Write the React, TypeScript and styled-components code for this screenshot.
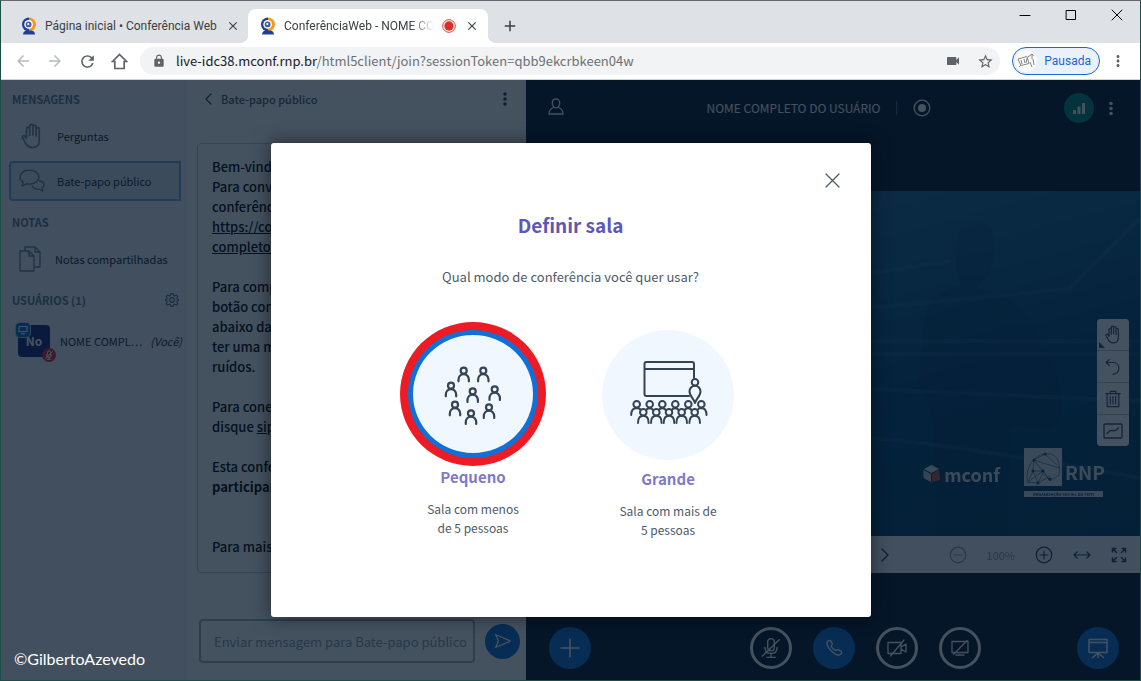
import React from "react";
import styled, { createGlobalStyle, css } from "styled-components";
import {
  MdAdd,
  MdArrowBack,
  MdArrowForward,
  MdClose,
  MdLock,
  MdMoreVert,
  MdRefresh,
  MdStarBorder,
  MdVideocam,
} from "react-icons/md";

const uiFont = `"Noto Sans CJK JP", "Noto Sans CJK SC", "Noto Sans", sans-serif`;

const GlobalStyle = createGlobalStyle`
  * { box-sizing: border-box; }
  body { margin: 0; font-family: ${uiFont}; }
  button, input { font-family: inherit; }
  button { padding: 0; border: 0; background: none; color: inherit; display: inline-flex; align-items: center; justify-content: center; }
  h1, h2, h3, p, ul { margin: 0; padding: 0; list-style: none; }
  svg { display: block; flex: none; }
`;

/* ---------- browser frame ---------- */

const Window = styled.div`
  min-height: 100vh;
  display: flex;
  flex-direction: column;
  border: 1px solid #1d4d47;
  border-top-color: #66686b;
  background: #dee1e6;
`;

const TabStrip = styled.div`
  display: flex;
  height: 42px;
  padding: 8px 0 0 7px;
`;

const Tab = styled.div<{ $active?: boolean }>`
  position: relative;
  display: flex;
  align-items: center;
  gap: 8px;
  width: 240px;
  padding: 0 8px 0 13px;
  border-radius: 8px 8px 0 0;
  font-family: Roboto, sans-serif;
  font-size: 12px;
  color: #3c4043;
  ${(p) =>
    p.$active &&
    css`
      padding: 0 9px 0 12px;
      background: #fff;
      &::before,
      &::after {
        content: "";
        position: absolute;
        bottom: 0;
        width: 8px;
        height: 8px;
      }
      &::before {
        left: -8px;
        background: radial-gradient(circle at 0 0, transparent 8px, #fff 8px);
      }
      &::after {
        right: -8px;
        background: radial-gradient(circle at 100% 0, transparent 8px, #fff 8px);
      }
    `}
`;

const TabTitle = styled.span<{ $fade?: boolean }>`
  flex: 1;
  overflow: hidden;
  white-space: nowrap;
  ${(p) =>
    p.$fade &&
    css`
      mask-image: linear-gradient(90deg, #000 84%, transparent);
    `}
`;

const TabActions = styled.span`
  display: flex;
  align-items: center;
  gap: 9px;
`;

const NewTab = styled.button`
  width: 44px;
  color: #3c4043;
`;

const WindowControls = styled.div`
  display: flex;
  align-items: flex-start;
  gap: 34px;
  margin-left: auto;
  padding-right: 17px;
`;

const AddressRow = styled.div`
  display: flex;
  align-items: center;
  gap: 12px;
  height: 37px;
  padding: 0 13px;
  background: #fff;
  border-bottom: 1px solid #d0d2d5;
  color: #5f6368;
`;

const NavButtons = styled.div`
  display: flex;
  gap: 14px;
`;

const AddressBar = styled.div`
  flex: 1;
  display: flex;
  align-items: center;
  gap: 10px;
  height: 28px;
  padding: 0 6px 0 12px;
  border-radius: 14px;
  background: #f1f3f4;
`;

const Url = styled.span`
  flex: 1;
  font-size: 13px;
  line-height: 20px;
  white-space: nowrap;
  color: #6d7175;
  b {
    font-weight: 400;
    color: #202124;
  }
`;

const BarActions = styled.div`
  display: flex;
  align-items: center;
  gap: 16px;
`;

const ProfileArea = styled.div`
  display: flex;
  align-items: center;
  gap: 9px;
`;

const Profile = styled.button`
  && {
    gap: 7px;
    height: 28px;
    padding: 0 8px 0 2px;
    border: 1px solid #1967d2;
    border-radius: 14px;
    background: #eaf1fb;
    color: #1967d2;
    font-family: Roboto, sans-serif;
    font-size: 12px;
  }
`;

/* ---------- conference page ---------- */

const Page = styled.div`
  position: relative;
  flex: 1;
  display: flex;
  background: #06172a;
`;

const Sidebar = styled.nav`
  width: 186px;
  padding: 10px 5px 0 8px;
  background: #f3f6fa;
  color: #3c4754;
  font-size: 11px;
  line-height: 18px;
`;

const SideHeading = styled.h2`
  display: flex;
  align-items: center;
  justify-content: space-between;
  height: 18px;
  padding: 0 3px;
  font-size: 11px;
  font-weight: 700;
  color: #667789;
`;

const SideItem = styled.button<{ $selected?: boolean }>`
  && {
    display: flex;
    justify-content: flex-start;
    gap: 12px;
    width: 172px;
    height: 40px;
    padding: 0 8px;
    font-size: 11px;
    white-space: nowrap;
    border: 2px solid transparent;
    border-radius: 4px 0 0 4px;
    color: #1c2733;
    ${(p) =>
      p.$selected &&
      css`
        border-color: #7aaae2;
        background: #dce6f3;
      `}
  }
  svg {
    color: #74859a;
  }
`;

const SideGroup = styled.section`
  padding-bottom: 12px;
  & > h2 + * {
    margin-top: 8px;
  }
`;

const ItemStack = styled.div`
  display: flex;
  flex-direction: column;
  gap: 5px;
`;

const UserRow = styled.div`
  display: flex;
  align-items: center;
  gap: 10px;
  padding: 8px 0 0 9px;
  white-space: nowrap;
  color: #1c2733;
`;

const UserName = styled.span`
  flex: 1;
  display: flex;
  justify-content: space-between;
`;

const Avatar = styled.div`
  position: relative;
  flex: none;
  display: grid;
  place-items: center;
  width: 32px;
  height: 32px;
  border-radius: 4px;
  background: #1a237e;
  color: #fff;
  font-size: 12px;
  font-weight: 700;
`;

const AvatarBadge = styled.span<{ $muted?: boolean }>`
  position: absolute;
  display: grid;
  place-items: center;
  width: 14px;
  height: 14px;
  color: #fff;
  ${(p) =>
    p.$muted
      ? css`
          right: -6px;
          bottom: -5px;
          border-radius: 50%;
          background: #df2721;
        `
      : css`
          left: -2px;
          top: -2px;
          border-radius: 4px;
          background: #0f70d7;
          box-shadow: 0 0 0 1px #b9d2ee;
        `}
`;

const Chat = styled.section`
  display: flex;
  flex-direction: column;
  width: 339px;
  padding: 0 6px 17px 10px;
  background: #fff;
`;

const ChatHeader = styled.header`
  display: flex;
  align-items: center;
  height: 38px;
  padding: 0 12px 0 8px;
  color: #2c3845;
  h2 {
    flex: 1;
    margin-left: 9px;
    font-size: 11px;
    font-weight: 500;
    color: #4e5a66;
  }
`;

const Messages = styled.div`
  margin: 25px 8px 0 0;
  padding: 13px 14px 15px;
  border: 1px solid #c4ccd6;
  border-radius: 4px;
  font-size: 13px;
  font-weight: 500;
  line-height: 20px;
  color: #000;
  white-space: pre;
  overflow: hidden;
  a {
    color: inherit;
  }
`;

const Composer = styled.form`
  display: flex;
  align-items: center;
  gap: 10px;
  margin-top: auto;
  padding-left: 2px;
`;

const MessageInput = styled.input`
  flex: 1;
  min-width: 0;
  height: 44px;
  padding: 0 2px 0 13px;
  border: 2px solid #a7b3bd;
  border-radius: 4px;
  background: #fff;
  font-size: 13px;
  &::placeholder {
    color: #8b9aa8;
    opacity: 1;
  }
`;

const RoundButton = styled.button<{ $size?: number; $outline?: boolean }>`
  && {
    width: ${(p) => p.$size ?? 42}px;
    height: ${(p) => p.$size ?? 42}px;
    border-radius: 50%;
    color: #fff;
    background: ${(p) => (p.$outline ? "transparent" : "#0f70d7")};
    border: ${(p) => (p.$outline ? "3px solid #fff" : "0")};
  }
`;

const Main = styled.main`
  flex: 1;
  display: flex;
  flex-direction: column;
  min-width: 0;
  color: #fff;
`;

const MainHeader = styled.header`
  display: grid;
  grid-template-columns: 60px 1fr 88px;
  align-items: center;
  height: 56px;
`;

const HeaderLeft = styled.div`
  padding-left: 22px;
`;

const HeaderTitle = styled.h1`
  display: flex;
  align-items: center;
  justify-content: center;
  gap: 16px;
  font-size: 12px;
  font-weight: 400;
  line-height: 20px;
  white-space: nowrap;
`;

const Divider = styled.span`
  width: 1px;
  height: 14px;
  background: #4a5f7e;
`;

const HeaderRight = styled.div`
  display: flex;
  align-items: center;
  justify-content: flex-end;
  gap: 14px;
  padding-right: 26px;
`;

const Signal = styled.button`
  && {
    width: 30px;
    height: 30px;
    border-radius: 50%;
    background: #00847a;
  }
`;

const StageArea = styled.div`
  flex: 1;
  display: flex;
  flex-direction: column;
  justify-content: center;
  padding-top: 12px;
`;

const Slide = styled.div`
  position: relative;
  display: flex;
  align-items: flex-end;
  justify-content: flex-end;
  gap: 24px;
  height: 345px;
  padding: 0 37px 39px 0;
  background: linear-gradient(165deg, #2c7aa4 0%, #16608f 30%, #044474 60%, #003f62 100%);
`;

const Backdrop = styled.svg`
  position: absolute;
  inset: 0;
  width: 100%;
  height: 100%;
`;

const Mconf = styled.div`
  position: relative;
  display: flex;
  align-items: center;
  gap: 4px;
  height: 46px;
  font-size: 18px;
  font-weight: 700;
  line-height: 20px;
  opacity: 0.85;
`;

const Rnp = styled.div`
  position: relative;
  width: 79px;
  opacity: 0.85;
`;

const RnpTop = styled.div`
  display: flex;
  align-items: flex-end;
  gap: 3px;
  margin-bottom: 5px;
  font-size: 19px;
  font-weight: 700;
  line-height: 28px;
`;

const RnpBar = styled.div`
  height: 6px;
  background: #fff;
  color: #00407a;
  font-size: 4px;
  font-weight: 700;
  line-height: 6px;
  text-align: center;
  white-space: nowrap;
`;

const Tools = styled.div`
  position: absolute;
  top: 128px;
  right: 11px;
  display: flex;
  flex-direction: column;
  gap: 1px;
  border-radius: 4px;
  overflow: hidden;
  background: #b8c2cc;
`;

const ToolButton = styled.button<{ $menu?: boolean }>`
  && {
    position: relative;
    width: 32px;
    height: 31px;
    background: #fff;
    color: #3b4c60;
  }
  ${(p) =>
    p.$menu &&
    css`
      &::after {
        content: "";
        position: absolute;
        left: 2px;
        bottom: 2px;
        border: 3px solid transparent;
        border-left-color: #3b4c60;
        border-bottom-color: #3b4c60;
      }
    `}
`;

const SlideBar = styled.div`
  display: grid;
  grid-template-columns: 1fr 112px 1fr;
  align-items: center;
  height: 37px;
  background: #f3f6fa;
  color: #2f4053;
`;

const SlideNav = styled.div`
  display: flex;
  justify-content: flex-end;
`;

const ZoomGroup = styled.div`
  display: flex;
  align-items: center;
  justify-content: flex-end;
  gap: 20px;
  padding-right: 13px;
  font-size: 11px;
  line-height: 16px;
  color: #2f4053;
`;

const Faded = styled.span`
  display: inline-flex;
  align-items: center;
  gap: 20px;
  opacity: 0.5;
`;

const ActionBar = styled.footer`
  display: flex;
  align-items: center;
  justify-content: space-between;
  height: 64px;
  padding: 0 21px 0 23px;
`;

const MediaButtons = styled.div`
  display: flex;
  gap: 21px;
  padding-left: 62px;
`;

/* ---------- dialog ---------- */

const Overlay = styled.div`
  position: absolute;
  inset: 0;
  display: grid;
  place-items: center;
  background: rgba(6, 23, 42, 0.75);
`;

const Dialog = styled.div`
  position: relative;
  display: flex;
  flex-direction: column;
  align-items: center;
  width: 600px;
  max-width: 90%;
  padding: 67px 30px 78px;
  border-radius: 3px;
  background: #fff;
  box-shadow: 0 0 18px rgba(0, 0, 0, 0.5);
  color: #4e5a66;
`;

const CloseButton = styled.button`
  position: absolute;
  top: 30px;
  right: 31px;
  color: #4e5a66;
`;

const DialogTitle = styled.h2`
  font-size: 19px;
  font-weight: 700;
  line-height: 30px;
  color: #5c58b6;
`;

const Question = styled.p`
  margin-top: 27px;
  font-size: 13px;
  line-height: 20px;
`;

const Choices = styled.div`
  display: flex;
  gap: 63px;
  margin-top: 43px;
`;

const Choice = styled.div`
  display: flex;
  flex-direction: column;
  align-items: center;
  width: 132px;
  text-align: center;
  p {
    margin-top: 10px;
    font-size: 12px;
    line-height: 19px;
  }
`;

const ChoiceButton = styled.button<{ $picked?: boolean }>`
  && {
    width: ${(p) => (p.$picked ? 130 : 132)}px;
    height: ${(p) => (p.$picked ? 128 : 130)}px;
    border-radius: 50%;
    background: #f0f7ff;
    color: #344454;
    ${(p) =>
      p.$picked &&
      css`
        border: 5px solid #0f70d7;
        box-shadow: 0 0 0 8px #ed1c24;
      `}
  }
`;

const ChoiceName = styled.h3`
  margin-top: 7px;
  font-size: 15px;
  font-weight: 700;
  line-height: 24px;
  color: #7f7ac8;
`;

const Credit = styled.span`
  position: absolute;
  left: 13px;
  bottom: 11px;
  font: 16px/20px Lato, sans-serif;
  color: #fff;
`;

/* ---------- icons ---------- */

type IconProps = {
  w?: number;
  h?: number;
  box?: string;
  sw?: number;
  children: React.ReactNode;
};

const Icon = ({ w = 20, h = w, box = "0 0 20 20", sw = 1.2, children }: IconProps) => (
  <svg
    width={w}
    height={h}
    viewBox={box}
    fill="none"
    stroke="currentColor"
    strokeWidth={sw}
    strokeLinecap="round"
    strokeLinejoin="round"
    aria-hidden="true"
  >
    {children}
  </svg>
);

const Favicon = () => (
  <svg width="16" height="18" viewBox="0 0 16 18" aria-hidden="true">
    <path d="M8 0.5a7 7 0 1 0 0 14z" fill="#1f3f94" />
    <path d="M8 0.5a7 7 0 1 1 0 14z" fill="#f7981d" />
    <path d="M2 17.5c0-2.500 2-4 4-4h4c2 0 4 1.500 4 4z" fill="#1f3f94" />
    <circle cx="7.600" cy="7.400" r="4.300" fill="#fff" />
    <circle cx="7.600" cy="7.400" r="2.900" fill="#3f5aa6" />
    <circle cx="7.300" cy="7.100" r="1.100" fill="#fff" />
  </svg>
);

const Hand = ({ w, h, sw = 1.6 }: { w: number; h: number; sw?: number }) => (
  <Icon w={w} h={h} box="0 0 22 26" sw={sw}>
    <path d="M5.500 15.500V6a1.600 1.600 0 0 1 3.200 0v6.500M8.700 12V3a1.600 1.600 0 0 1 3.200 0v9M11.900 12V3.600a1.600 1.600 0 0 1 3.200 0V13M15.100 13V6.200a1.600 1.600 0 0 1 3.200 0v11.300c0 4.500-2.800 7-6.800 7-3.500 0-5.200-1.300-6.700-4L1.500 14.600c-.7-1.400 1.200-2.900 2.500-1.300l1.500 2.200" />
  </Icon>
);

const Bubbles = () => (
  <Icon w={26} h={26} box="0 0 26 26" sw={1.5}>
    <path d="M10.500 2C5.200 2 1 5.100 1 9c0 2.200 1.300 4 3.300 5.300L3.200 18l4.500-2.300c.9.200 1.800.3 2.800.3C15.800 16 20 12.900 20 9s-4.200-7-9.500-7z" />
    <path d="M20.800 13c2.500.4 4.200 2 4.200 4 0 1.300-.8 2.400-2 3.200l.6 3-3.200-2c-3.300.5-6.400-.8-7-3.200" />
  </Icon>
);

const Pages = () => (
  <Icon w={24} h={26} box="0 0 24 26" sw={1.4}>
    <path d="M1 5h9l5 5v15H1zM10 5v5h5M6 5V1h10l5 5v15h-6M16 1v5h5" />
  </Icon>
);

const Gear = () => (
  <Icon w={14} sw={1.7}>
    <circle cx="10" cy="10" r="3.300" />
    <path d="M8.300 1h3.400l.6 2.500 1.500.7 2.400-1.300 2.100 2.300-1.300 2.300.6 1.400 2.100.6v1.200l-2.100.6-.6 1.500 1.300 2.200-2.100 2.200-2.400-1.200-1.500.6-.6 2.400H8.300l-.6-2.400-1.500-.6-2.400 1.200L1.700 15 3 12.800l-.6-1.500-2-.6V9.500l2-.6.6-1.400-1.300-2.300 2.100-2.300 2.400 1.300 1.500-.7z" />
  </Icon>
);

const Chevron = ({ left }: { left?: boolean }) => (
  <Icon w={left ? 7 : 8} h={left ? 12 : 14} box="0 0 8 14" sw={1.4}>
    <path d={left ? "M7 1 1 7l6 6" : "M1 1l6 6-6 6"} />
  </Icon>
);

const Kebab = ({ h = 16 }: { h?: number }) => (
  <svg width="6" height={h} viewBox="0 0 6 16" fill="currentColor" aria-hidden="true">
    <circle cx="3" cy="3" r="1.800" />
    <circle cx="3" cy="8" r="1.800" />
    <circle cx="3" cy="13" r="1.800" />
  </svg>
);

const UserIcon = () => (
  <Icon w={16} h={17} box="0 0 16 17" sw={1.3}>
    <path d="M8 1C5.800 1 4.300 2.600 4.300 5S6 9.800 8 9.800 11.700 7.400 11.700 5 10.200 1 8 1zM5.500 9.500C2.800 10.500 1 12.500 1 16h14c0-3.500-1.800-5.500-4.500-6.500" />
  </Icon>
);

const Person = ({ x, y }: { x: number; y: number }) => (
  <g transform={`translate(${x} ${y})`}>
    <circle r="3" />
    <path d="M-5.200 10.600V9c0-3.300 2.200-5.600 5.200-5.600S5.200 5.700 5.200 9v1.600" />
  </g>
);

const smallRoom = [
  [23.7, 9.7],
  [43.3, 9.7],
  [11, 24.7],
  [54.7, 28.3],
  [32.7, 30.3],
  [15, 43.7],
  [49, 46.3],
  [31, 52.3],
];

const SmallRoom = () => (
  <Icon w={66} box="0 0 66 66" sw={2.2}>
    {smallRoom.map(([x, y]) => (
      <Person key={`${x}-${y}`} x={x} y={y} />
    ))}
  </Icon>
);

const LargeRoom = () => (
  <Icon w={80} box="0 0 80 80" sw={2}>
    <path d="M61 41H18.500a2 2 0 0 1-2-2V9a2 2 0 0 1 2-2h45.500a2 2 0 0 1 2 2v14M16.500 14H66" />
    <circle cx="67" cy="27.300" r="3.300" />
    <path d="M67 48c-1-4-5.500-7-5.500-11.500 0-3 2.300-5.700 5.500-5.700s5.500 2.700 5.500 5.700C72.500 41 68 44 67 48z" />
    {[8.7, 21.7, 34.3, 47.3, 60.3, 73.3].map((x) => (
      <circle key={x} cx={x} cy="49.300" r="3.300" />
    ))}
    <path d="M3.200 60c0-4 1.800-6.900 5.500-7 2.400 0 3.600 1 4.200 2.200M18 55.500c1-3 6-3 7.200 0M30.700 55.500c1-3 6-3 7.200 0M43.500 55.500c1-3 6-3 7.200 0M56.500 55.500c1-3 6-3 7.200 0M69.600 54.800c.8-1.200 2-1.800 3.700-1.800 3.700.1 5.200 3 5.200 7" />
    {[15.3, 28.3, 41, 53.7, 66.7].map((x) => (
      <g key={x} transform={`translate(${x} 57.300)`}>
        <circle r="3.300" fill="#f0f7ff" />
        <path d="M-5.300 10.700C-5.300 6.500-3.500 3.500 0 3.500S5.300 6.500 5.300 10.700" />
      </g>
    ))}
  </Icon>
);

const MicOff = ({ w = 22, sw = 1.3 }: { w?: number; sw?: number }) => (
  <Icon w={w} sw={sw}>
    <rect x="7" y="1.500" width="6" height="11" rx="3" />
    <path d="M4.500 9.500c0 3.500 2.200 5.500 5.500 5.500s5.500-2 5.500-5.500M10 15v3.500M6 18.500h8M2 17.500 17.500 2.500" />
  </Icon>
);

const RnpMark = () => (
  <svg width="38" height="38" viewBox="0 0 38 38" fill="none" stroke="#5b7898" strokeWidth="0.800" aria-hidden="true">
    <rect width="38" height="38" fill="#fff" stroke="none" />
    <path d="M3 34C2 20 8 8 21 6s16 10 14 21M21 6 10 12l25 8M10 12l-1 11-5 11 15-11M9 23l10 0 7 10M9 23l5 12 6-12M10 12l16 21 9-6M21 6l14 13M3 34l11 1 12-7" />
    <g fill="#24476f" stroke="none">
      <circle cx="21" cy="6" r="1.500" />
      <circle cx="10" cy="12" r="1.500" />
      <circle cx="9" cy="23" r="1.500" />
      <circle cx="19" cy="23" r="1.500" />
      <circle cx="26" cy="31" r="1.500" />
      <circle cx="14" cy="35" r="1.500" />
    </g>
  </svg>
);

/* ---------- sections ---------- */

const Browser = () => (
  <>
    <TabStrip>
      <Tab>
        <Favicon />
        <TabTitle>Página inicial • Conferência Web</TabTitle>
        <button aria-label="Fechar guia">
          <MdClose size={14} />
        </button>
      </Tab>
      <Tab $active>
        <Favicon />
        <TabTitle $fade>ConferênciaWeb - NOME CO</TabTitle>
        <TabActions>
          <svg width="14" height="14" viewBox="0 0 12 12" aria-hidden="true">
            <circle cx="6" cy="6" r="5.400" fill="none" stroke="#d93025" strokeWidth="0.800" />
            <circle cx="6" cy="6" r="4" fill="#d93025" />
          </svg>
          <button aria-label="Fechar guia">
            <MdClose size={14} />
          </button>
        </TabActions>
      </Tab>
      <NewTab aria-label="Nova guia">
        <MdAdd size={18} />
      </NewTab>
      <WindowControls>
        <button aria-label="Minimizar">
          <Icon w={12} box="0 0 12 12" sw={1}>
            <path d="M1 6.500h10" stroke="#000" />
          </Icon>
        </button>
        <button aria-label="Maximizar">
          <Icon w={12} box="0 0 12 12" sw={1}>
            <path d="M1.500 1.500h9v9h-9z" stroke="#000" />
          </Icon>
        </button>
        <button aria-label="Fechar">
          <Icon w={12} box="0 0 12 12" sw={1}>
            <path d="M1 1l10 10M11 1 1 11" stroke="#000" />
          </Icon>
        </button>
      </WindowControls>
    </TabStrip>
    <AddressRow>
      <NavButtons>
        <button aria-label="Voltar">
          <MdArrowBack size={18} color="#b9bbbe" />
        </button>
        <button aria-label="Avançar">
          <MdArrowForward size={18} color="#b9bbbe" />
        </button>
        <button aria-label="Recarregar">
          <MdRefresh size={19} />
        </button>
        <button aria-label="Página inicial">
          <Icon w={17} h={17} box="0 0 17 17" sw={1.7}>
            <path d="M1.500 8.500 8.500 1.500l7 7h-2.300v7H3.800v-7z" strokeLinejoin="miter" />
          </Icon>
        </button>
      </NavButtons>
      <AddressBar>
        <MdLock size={14} />
        <Url>
          <b>live-idc38.mconf.rnp.br</b>/html5client/join?sessionToken=qbb9ekcrbkeen04w
        </Url>
        <BarActions>
          <MdVideocam size={16} />
          <button aria-label="Favoritar">
            <MdStarBorder size={17} />
          </button>
        </BarActions>
      </AddressBar>
      <ProfileArea>
        <Profile>
          <svg width="22" height="22" viewBox="0 0 22 22" aria-hidden="true">
            <circle cx="11" cy="11" r="11" fill="#fafafa" />
            <path
              d="M3 9l9-2.500 2 7-8 2zM13 7l4-3 1.500 2M15 12l2 5M6 15l-2 2M17 4v5M6 10l1 4M9 9l1 4M12 8l-1 5M18 9l1 6"
              fill="none"
              stroke="#888"
              strokeWidth="1"
            />
          </svg>
          Pausada
        </Profile>
        <button aria-label="Menu">
          <MdMoreVert size={18} />
        </button>
      </ProfileArea>
    </AddressRow>
  </>
);

const SidePanel = () => (
  <Sidebar>
    <SideGroup>
      <SideHeading>MENSAGENS</SideHeading>
      <ItemStack>
        <SideItem>
          <Hand w={26} h={26} />
          Perguntas
        </SideItem>
        <SideItem $selected>
          <Bubbles />
          Bate-papo público
        </SideItem>
      </ItemStack>
    </SideGroup>
    <SideGroup>
      <SideHeading>NOTAS</SideHeading>
      <SideItem>
        <Pages />
        Notas compartilhadas
      </SideItem>
    </SideGroup>
    <SideGroup>
      <SideHeading>
        USUÁRIOS (1)
        <button aria-label="Gerenciar usuários">
          <Gear />
        </button>
      </SideHeading>
      <UserRow>
        <Avatar>
          No
          <AvatarBadge>
            <Icon w={10} h={10} box="0 0 10 10" sw={1.2}>
              <path d="M1 1.500h8v5H1zM3.500 8.700h3" />
            </Icon>
          </AvatarBadge>
          <AvatarBadge $muted>
            <MicOff w={10} sw={2} />
          </AvatarBadge>
        </Avatar>
        <UserName>
          <span>NOME COMPL…</span>
          <em>(Você)</em>
        </UserName>
      </UserRow>
    </SideGroup>
  </Sidebar>
);

const ChatPanel = () => (
  <Chat>
    <ChatHeader>
      <Chevron left />
      <h2>Bate-papo público</h2>
      <button aria-label="Opções do bate-papo">
        <Kebab />
      </button>
    </ChatHeader>
    <Messages>
      {"Bem-vindo\nPara convi\nconferênci\n"}
      <a href="#sala">{"https://con\ncompleto-"}</a>
      {"\n\nPara comp\nbotão com\nabaixo da\nter uma m\nruídos.\n\nPara cone\ndisque "}
      <a href="#sip">sip</a>
      {"\n\nEsta confe\n"}
      <b>participan</b>
      {"\n\n\nPara mais\n"}
    </Messages>
    <Composer>
      <MessageInput
        aria-label="Mensagem"
        placeholder="Enviar mensagem para Bate-papo público"
      />
      <RoundButton type="button" $size={35} aria-label="Enviar mensagem">
        <Icon w={18} h={16} box="0 0 18 16" sw={1.3}>
          <path d="M1.500 1.500 16.500 8l-15 6.500L4.500 8z" />
        </Icon>
      </RoundButton>
    </Composer>
  </Chat>
);

const Presentation = () => (
  <Main>
    <MainHeader>
      <HeaderLeft>
        <button aria-label="Usuários">
          <UserIcon />
        </button>
      </HeaderLeft>
      <HeaderTitle>
        NOME COMPLETO DO USUÁRIO
        <Divider />
        <Icon w={18} box="0 0 18 18" sw={1.3}>
          <circle cx="9" cy="9" r="7.800" />
          <circle cx="9" cy="9" r="4" fill="currentColor" stroke="none" />
        </Icon>
      </HeaderTitle>
      <HeaderRight>
        <Signal aria-label="Conexão">
          <svg width="12" height="12" viewBox="0 0 12 12" fill="currentColor" aria-hidden="true">
            <path d="M0 8h3v4H0zM4.500 4.500h3V12h-3zM9 1h3v11H9z" />
          </svg>
        </Signal>
        <button aria-label="Opções">
          <Kebab h={17} />
        </button>
      </HeaderRight>
    </MainHeader>
    <StageArea>
      <Slide>
        <Backdrop viewBox="0 0 614 345" preserveAspectRatio="xMaxYMid slice" aria-hidden="true">
          <g fill="#04294a" opacity="0.160">
            <path d="M430 60c0-24 8-33 22-30 14 2 18 14 17 28l-5 24-12 14v22h-14l-2-26c-8-6-6-20-6-32z" />
            <path d="M438 92c-24 6-38 18-40 40l-6 60c6 14 12 22 16 42l2 111h70l6-110 22 2c16 8 26-6 28-22 0-22-10-44-20-60-10-32-30-50-56-56z" />
          </g>
          <g fill="none" stroke="#5f9ec4" strokeWidth="4" opacity="0.160">
            <path d="M345 82l80-12M345 117l198-19 71-70M345 150l269 0M345 163l269 0M345 198l269 12M345 247c70 6 150 18 269 40" />
          </g>
        </Backdrop>
        <Mconf>
          <svg width="17" height="18" viewBox="0 0 17 18" aria-hidden="true">
            <path d="M8.500 0 16 4 8.500 8 1 4z" fill="#fff" />
            <path d="M0.500 5 8 9v8L0.500 13z" fill="#e4e9ee" />
            <path d="M9 9l7-4 1 10-8 2z" fill="#e8562a" />
          </svg>
          mconf
        </Mconf>
        <Rnp>
          <RnpTop>
            <RnpMark />
            RNP
          </RnpTop>
          <RnpBar>ORGANIZAÇÃO SOCIAL DO MCTI</RnpBar>
        </Rnp>
        <Tools>
          <ToolButton $menu aria-label="Mover">
            <Hand w={16} h={19} sw={1.6} />
          </ToolButton>
          <ToolButton aria-label="Desfazer">
            <Icon w={18} sw={1.3}>
              <path d="M6 1.500 2.500 5 6 8.500M2.500 5H10c4 0 6.500 2.700 6.500 6.300S14 18 10 18" />
            </Icon>
          </ToolButton>
          <ToolButton aria-label="Limpar">
            <Icon w={18} sw={1.3}>
              <path d="M2 4h16M7 4V1.500h6V4M3.500 4v14.500h13V4M7 7v8.500M10 7v8.500M13 7v8.500" />
            </Icon>
          </ToolButton>
          <ToolButton aria-label="Quadro multiusuário">
            <Icon w={20} h={16} box="0 0 20 16" sw={1.3}>
              <rect x="1" y="1" width="18" height="14" rx="1" />
              <path d="M4 10.500c2-2 3-3.500 5-3s3 .5 4-.5L15.500 5" />
            </Icon>
          </ToolButton>
        </Tools>
      </Slide>
      <SlideBar>
        <span />
        <SlideNav>
          <button aria-label="Próximo slide">
            <Chevron />
          </button>
        </SlideNav>
        <ZoomGroup>
          <Faded>
            <button aria-label="Diminuir zoom">
              <Icon w={18} box="0 0 18 18">
                <circle cx="9" cy="9" r="7.800" />
                <path d="M5 9h8" />
              </Icon>
            </button>
            100%
          </Faded>
          <button aria-label="Aumentar zoom">
            <Icon w={18} box="0 0 18 18">
              <circle cx="9" cy="9" r="7.800" />
              <path d="M5 9h8M9 5v8" />
            </Icon>
          </button>
          <button aria-label="Ajustar à largura">
            <Icon w={18} h={8} box="0 0 18 8">
              <path d="M1 4h16M4 1 1 4l3 3M14 1l3 3-3 3" />
            </Icon>
          </button>
          <button aria-label="Tela cheia">
            <Icon w={16} box="0 0 16 16" sw={1.5}>
              <path d="M1.500 5V1.500H5M1.500 1.500l4 4M11 1.500h3.500V5M14.500 1.500l-4 4M1.500 11v3.500H5M1.500 14.500l4-4M11 14.500h3.500V11M14.500 14.500l-4-4" />
            </Icon>
          </button>
        </ZoomGroup>
      </SlideBar>
    </StageArea>
    <ActionBar>
      <RoundButton aria-label="Ações">
        <Icon w={20} sw={1.6}>
          <path d="M1 10h18M10 1v18" />
        </Icon>
      </RoundButton>
      <MediaButtons>
        <RoundButton $outline aria-label="Ativar microfone">
          <MicOff />
        </RoundButton>
        <RoundButton aria-label="Sair do áudio">
          <Icon w={18} sw={1.5}>
            <path d="M3 2.500C4.500 1 6 1.500 7 3l1 2c.7 1.400-1 2-1 3.200.8 2 2.700 3.700 4.700 4.700 1.300 0 1.800-1.700 3.300-1l2.500 1.500c1.500 1 1.200 2.400 0 3.500-1.500 1.300-3.400 1.300-5 .5C8.500 15.300 4.500 11.500 2.500 7c-.7-1.700-.8-3.200.5-4.500z" />
          </Icon>
        </RoundButton>
        <RoundButton $outline aria-label="Compartilhar webcam">
          <Icon w={22} h={20} box="0 0 22 20" sw={1.3}>
            <path d="M2 4.500h13v11H2zM15 9l5-3v8l-5-3M4.500 18 18 2" />
          </Icon>
        </RoundButton>
        <RoundButton $outline aria-label="Compartilhar tela">
          <Icon w={20} sw={1.3}>
            <path d="M2 3.500h16v11H2zM6 17h8M3.500 16.500 17 2.500" />
          </Icon>
        </RoundButton>
      </MediaButtons>
      <RoundButton aria-label="Apresentação">
        <Icon w={22} box="0 0 22 22" sw={1.5}>
          <path d="M2 2.500h18v13H2zM2 5.500h18M11 15.500v5M11 16l-5.500 4.500M11 16l5.500 4.500" />
        </Icon>
      </RoundButton>
    </ActionBar>
  </Main>
);

const RoomDialog = () => (
  <Overlay>
    <Dialog role="dialog" aria-labelledby="room-title">
      <CloseButton aria-label="Fechar">
        <Icon w={15} box="0 0 15 15" sw={1.3}>
          <path d="M1 1l13 13M14 1 1 14" />
        </Icon>
      </CloseButton>
      <DialogTitle id="room-title">Definir sala</DialogTitle>
      <Question>Qual modo de conferência você quer usar?</Question>
      <Choices>
        <Choice>
          <ChoiceButton $picked aria-labelledby="room-small">
            <SmallRoom />
          </ChoiceButton>
          <ChoiceName id="room-small">Pequeno</ChoiceName>
          <p>
            Sala com menos
            <br />
            de 5 pessoas
          </p>
        </Choice>
        <Choice>
          <ChoiceButton aria-labelledby="room-large">
            <LargeRoom />
          </ChoiceButton>
          <ChoiceName id="room-large">Grande</ChoiceName>
          <p>
            Sala com mais de
            <br />5 pessoas
          </p>
        </Choice>
      </Choices>
    </Dialog>
  </Overlay>
);

export default function App() {
  return (
    <>
      <GlobalStyle />
      <Window>
        <Browser />
        <Page>
          <SidePanel />
          <ChatPanel />
          <Presentation />
          <RoomDialog />
          <Credit>©GilbertoAzevedo</Credit>
        </Page>
      </Window>
    </>
  );
}
